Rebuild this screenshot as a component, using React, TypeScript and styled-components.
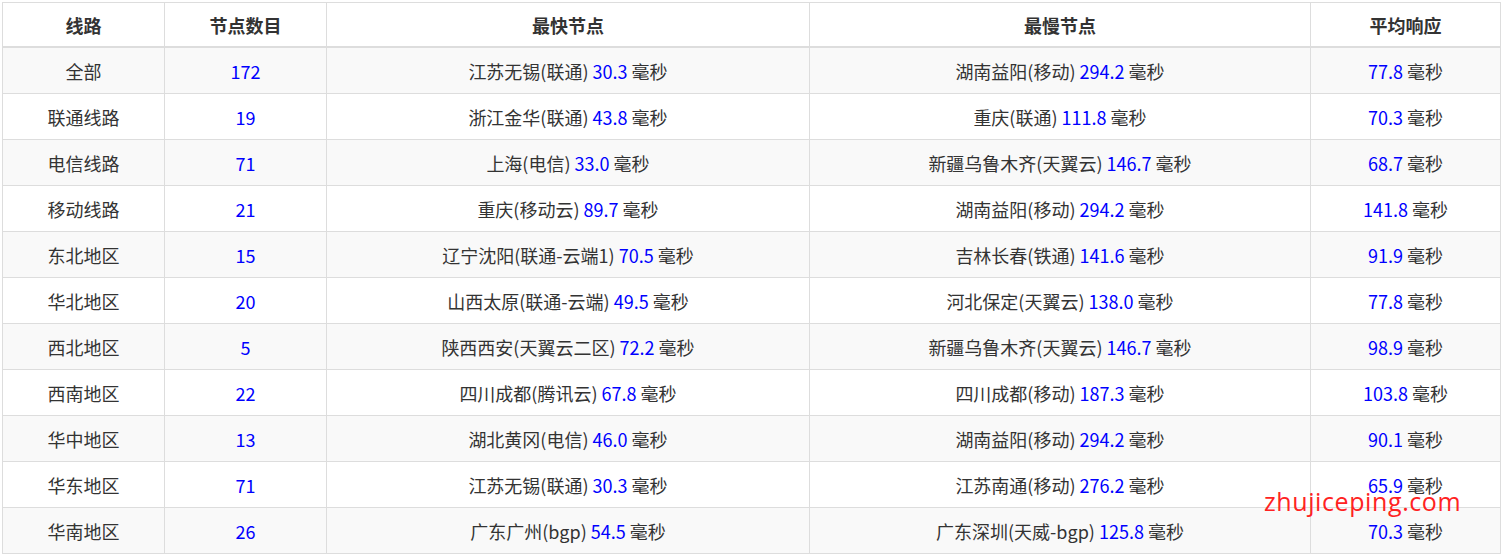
import styled, { createGlobalStyle } from "styled-components";

const Global = createGlobalStyle`
  body { margin: 0; background: #fff; font-family: "Noto Sans CJK SC", "Noto Sans", sans-serif; }
`;

const rows: [string, string, string, string, string, string, string][] = [
  ["全部", "172", "江苏无锡(联通)", "30.3", "湖南益阳(移动)", "294.2", "77.8"],
  ["联通线路", "19", "浙江金华(联通)", "43.8", "重庆(联通)", "111.8", "70.3"],
  ["电信线路", "71", "上海(电信)", "33.0", "新疆乌鲁木齐(天翼云)", "146.7", "68.7"],
  ["移动线路", "21", "重庆(移动云)", "89.7", "湖南益阳(移动)", "294.2", "141.8"],
  ["东北地区", "15", "辽宁沈阳(联通-云端1)", "70.5", "吉林长春(铁通)", "141.6", "91.9"],
  ["华北地区", "20", "山西太原(联通-云端)", "49.5", "河北保定(天翼云)", "138.0", "77.8"],
  ["西北地区", "5", "陕西西安(天翼云二区)", "72.2", "新疆乌鲁木齐(天翼云)", "146.7", "98.9"],
  ["西南地区", "22", "四川成都(腾讯云)", "67.8", "四川成都(移动)", "187.3", "103.8"],
  ["华中地区", "13", "湖北黄冈(电信)", "46.0", "湖南益阳(移动)", "294.2", "90.1"],
  ["华东地区", "71", "江苏无锡(联通)", "30.3", "江苏南通(移动)", "276.2", "65.9"],
  ["华南地区", "26", "广东广州(bgp)", "54.5", "广东深圳(天威-bgp)", "125.8", "70.3"],
];

const Wrap = styled.div`
  position: relative;
  padding: 2px 0 0 2px;
`;

const Table = styled.table`
  border-collapse: collapse;
  table-layout: fixed;
  width: 1498px;
  font-size: 18px;
  color: #333;
`;

const Th = styled.th`
  height: 43px;
  border: 1px solid #ddd;
  border-bottom: 2px solid #ddd;
  font-weight: bold;
  text-align: center;
  padding: 0;
`;

const Tr = styled.tr<{ $odd: boolean }>`
  background: ${(p) => (p.$odd ? "#f9f9f9" : "#fff")};
`;

const Td = styled.td`
  height: 45px;
  border: 1px solid #ddd;
  text-align: center;
  padding: 0;
`;

const Num = styled.span`
  color: #00f;
`;

const Mark = styled.div`
  position: absolute;
  left: 1264px;
  top: 484px;
  color: #f22;
  font-family: "Open Sans", sans-serif;
  font-size: 25px;
  letter-spacing: 0.6px;
`;

const Ms = ({ v }: { v: string }) => (
  <>
    <Num>{v}</Num> 毫秒
  </>
);

export default function App() {
  return (
    <Wrap>
      <Global />
      <Table>
        <colgroup>
          <col style={{ width: 162 }} />
          <col style={{ width: 162 }} />
          <col style={{ width: 483 }} />
          <col style={{ width: 501 }} />
          <col style={{ width: 190 }} />
        </colgroup>
        <thead>
          <tr>
            <Th>线路</Th>
            <Th>节点数目</Th>
            <Th>最快节点</Th>
            <Th>最慢节点</Th>
            <Th>平均响应</Th>
          </tr>
        </thead>
        <tbody>
          {rows.map((r, i) => (
            <Tr key={i} $odd={i % 2 === 0}>
              <Td>{r[0]}</Td>
              <Td><Num>{r[1]}</Num></Td>
              <Td>{r[2]} <Ms v={r[3]} /></Td>
              <Td>{r[4]} <Ms v={r[5]} /></Td>
              <Td><Ms v={r[6]} /></Td>
            </Tr>
          ))}
        </tbody>
      </Table>
      <Mark>zhujiceping.com</Mark>
    </Wrap>
  );
}
